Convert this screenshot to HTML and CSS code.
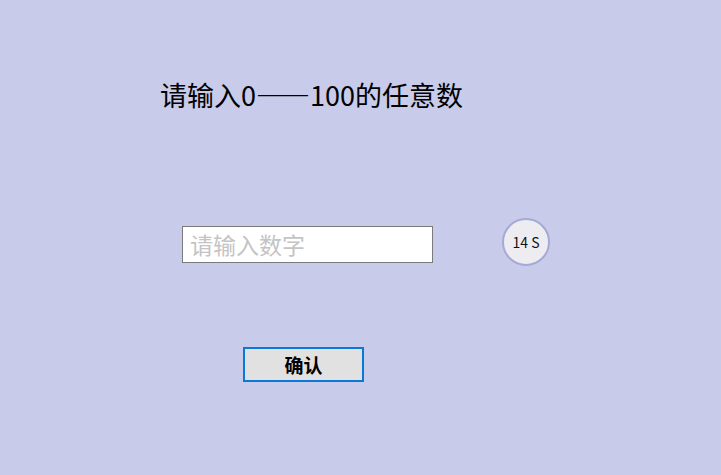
FILE: index.html
```html
<!DOCTYPE html>
<html lang="zh-CN">
<head>
  <meta charset="UTF-8">
  <title>猜数字</title>
  <link rel="stylesheet" href="styles.css">
</head>
<body>
  <div class="page">
    <h1 class="title">请输入0——100的任意数</h1>

    <div class="row">
      <input type="text" class="num-input" placeholder="请输入数字">
      <div class="timer">14 S</div>
    </div>

    <button class="ok-btn">确认</button>
  </div>
</body>
</html>
```

FILE: styles.css
```css
* { margin: 0; padding: 0; box-sizing: border-box; }
html, body {
  height: 100%;
}
body {
  background: #c9cbeb;
  color: #000;
  font-family: "Noto Sans CJK SC", "Noto Sans", sans-serif;
  overflow: hidden;
}
.page {
  display: flex;
  flex-direction: column;
  align-items: flex-start;
}
.title {
  margin: 76px 0 0 160px;
  font-size: 27px;
  font-weight: normal;
  line-height: 38px;
}
.row {
  display: flex;
  align-items: center;
  margin: 108px 0 0 182px;
}
.num-input {
  width: 251px;
  height: 37px;
  padding: 0 7px;
  border: 1px solid #7a7a7a;
  background: #fff;
  font-family: inherit;
  font-size: 23px;
  outline: none;
}
.num-input::placeholder { color: #c4c4c4; }
.timer {
  width: 48px;
  height: 48px;
  margin: -4px 0 0 69px;
  border: 2px solid #a6a9d6;
  border-radius: 50%;
  background: #ececf1;
  display: flex;
  align-items: center;
  justify-content: center;
  font-size: 14px;
  color: #111;
}
.ok-btn {
  margin: 81px 0 0 243px;
  width: 121px;
  height: 35px;
  border: 2px solid #0a78d7;
  background: #e1e1e1;
  font-family: inherit;
  font-size: 19px;
  font-weight: bold;
  color: #000;
  cursor: pointer;
}
```
